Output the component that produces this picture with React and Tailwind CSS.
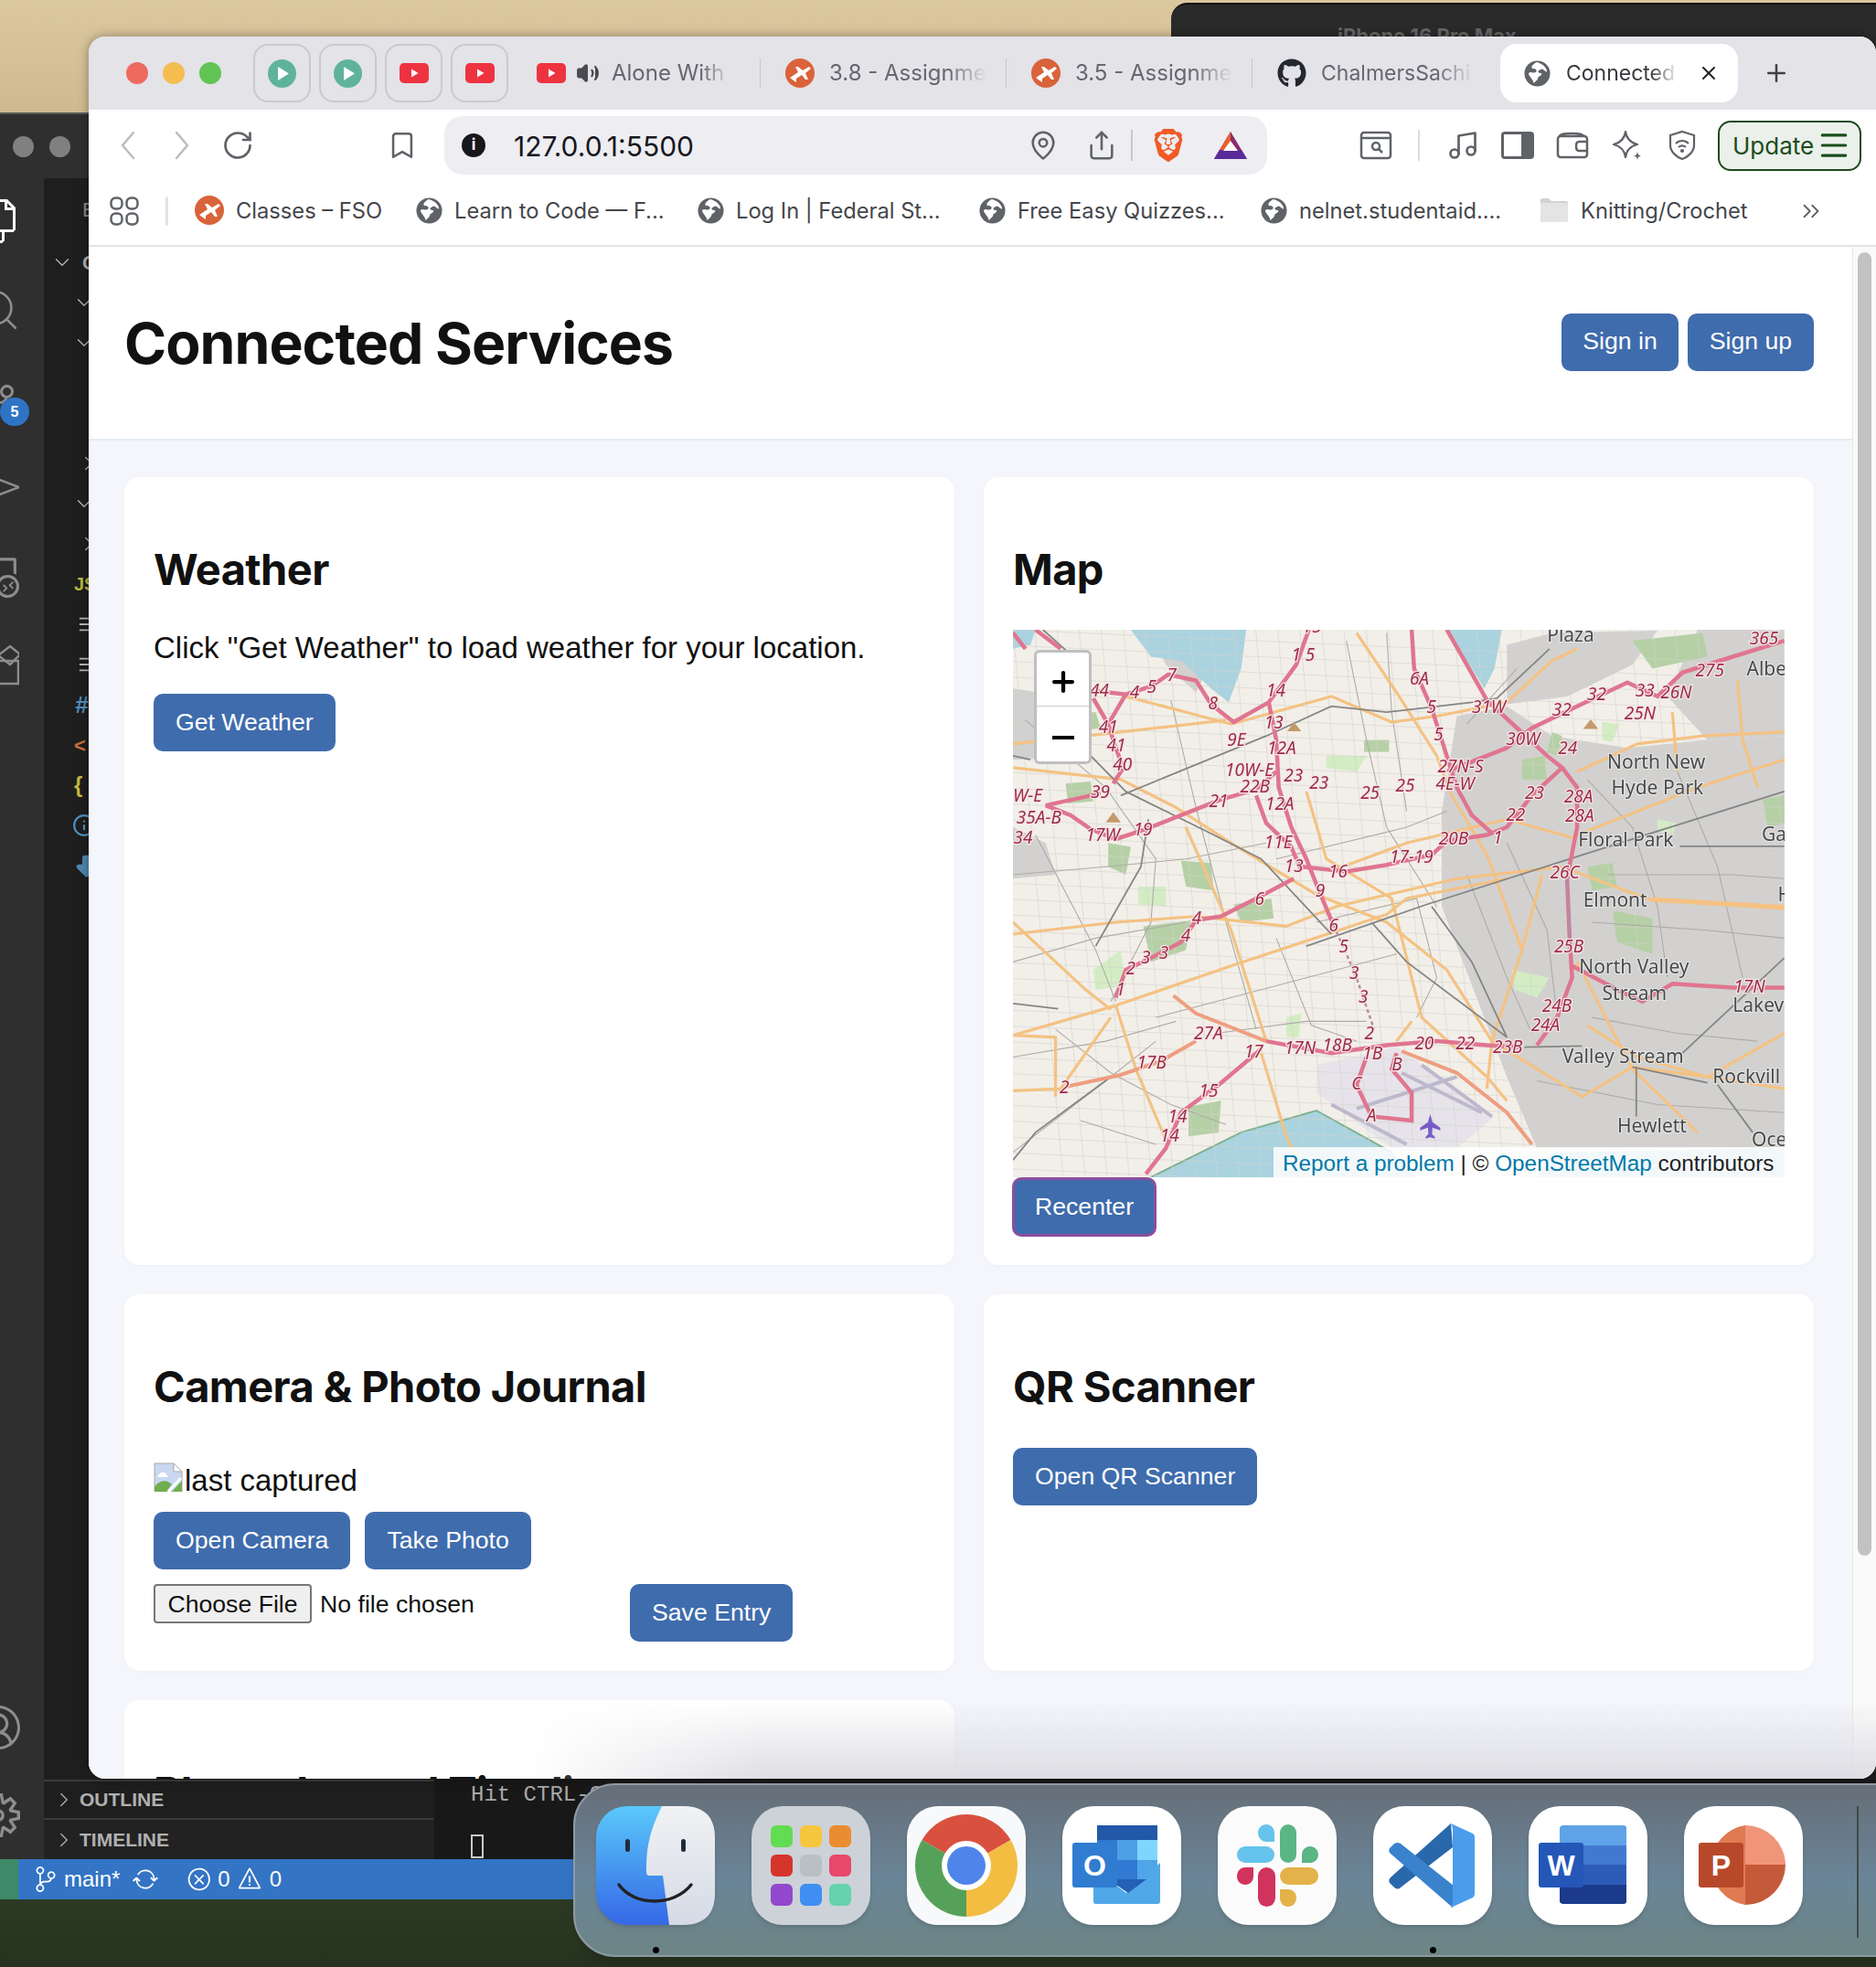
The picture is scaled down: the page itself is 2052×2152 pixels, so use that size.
import React from 'react';
import { ChevronRight, ChevronDown, RotateCw, Bookmark, MapPin, Share, Volume2, X, Plus, Music, Menu, ChevronsRight, Info, Search, ArrowBigDown } from 'lucide-react';
import { FaGithub } from 'react-icons/fa';
import { SiBrave } from 'react-icons/si';
import { VscFiles, VscSourceControl, VscRemoteExplorer, VscAccount, VscSettingsGear, VscSync, VscError, VscWarning } from 'react-icons/vsc';

// map data is in the crop's coordinates, mx/my bring it to map pixels
const mx = (x) => (x - 15) / 1.823;
const my = (y) => (y - 22) / 2.306;
const pts = (a) => {
  const out = [];
  for (let i = 0; i < a.length; i += 2) out.push(`${mx(a[i]).toFixed(1)},${my(a[i + 1]).toFixed(1)}`);
  return out.join(' ');
};

const grayAreas = [
  [900, 240, 1000, 215, 1090, 290, 1240, 320, 1400, 300, 1553, 290, 1553, 1330, 1060, 1330, 1000, 1150, 870, 720, 870, 480],
  [1000, 60, 1090, 30, 1300, 24, 1250, 110, 1120, 190, 1000, 210],
  [1380, 22, 1553, 22, 1553, 290, 1400, 300, 1320, 190],
  [15, 170, 120, 190, 170, 340, 15, 350],
  [15, 520, 80, 560, 100, 640, 15, 650],
  [300, 60, 400, 130, 380, 180, 320, 110],
];
const waterAreas = [
  [250, 22, 480, 22, 470, 120, 445, 205, 410, 170, 350, 100, 290, 90],
  [880, 22, 990, 22, 975, 120, 955, 170, 920, 100],
  [290, 1403, 470, 1290, 620, 1235, 770, 1340, 820, 1403],
  [15, 22, 60, 22, 50, 60, 15, 70],
  [1090, 1340, 1553, 1330, 1553, 1403, 1060, 1403],
];
const greenAreas = [
  [120, 410, 170, 405, 175, 455, 125, 460],
  [205, 560, 250, 570, 240, 640, 205, 620],
  [265, 670, 320, 670, 320, 720, 265, 715],
  [350, 605, 410, 610, 415, 680, 360, 670],
  [275, 770, 370, 755, 360, 830, 290, 860],
  [175, 880, 230, 830, 240, 920, 180, 930],
  [455, 715, 530, 700, 535, 750, 470, 760],
  [1210, 730, 1290, 750, 1290, 840, 1220, 810],
  [1010, 880, 1085, 900, 1060, 950, 1015, 930],
  [365, 1225, 430, 1210, 425, 1290, 365, 1300],
  [715, 300, 765, 300, 765, 330, 715, 330],
  [640, 340, 720, 340, 700, 380, 640, 370],
  [1250, 50, 1390, 30, 1400, 90, 1290, 120],
  [1030, 350, 1075, 340, 1080, 400, 1030, 400],
  [1190, 255, 1225, 260, 1210, 305, 1190, 300],
  [100, 220, 180, 230, 190, 270, 130, 280],
  [1090, 280, 1110, 290, 1100, 340, 1080, 330],
  [1300, 500, 1340, 510, 1330, 540, 1300, 530],
  [1160, 620, 1210, 610, 1220, 670, 1170, 680],
  [1510, 450, 1553, 440, 1553, 510, 1520, 520],
  [560, 1000, 590, 990, 585, 1050, 560, 1050],
];
const gridRoads = [];
for (let i = 0; i < 36; i++) {
  gridRoads.push([15 + i * 44, 22, 115 + i * 44, 1403]);
  gridRoads.push([15, 22 + i * 40, 1553, 110 + i * 40]);
}
const minorRoads = [
  [40, 250, 200, 420, 300, 600, 290, 760, 210, 960], [330, 200, 380, 470, 440, 760, 500, 1030],
  [15, 640, 200, 620, 360, 600, 520, 560], [15, 860, 180, 800, 360, 760], [60, 540, 180, 830, 220, 960],
  [15, 1100, 200, 1060, 340, 1010], [100, 1030, 210, 1140, 330, 1220, 440, 1270], [15, 1340, 200, 1160, 300, 1060],
  [680, 50, 720, 300, 760, 520, 860, 720], [760, 30, 770, 230, 800, 480], [540, 600, 800, 520, 880, 480],
  [620, 760, 820, 700, 860, 900, 820, 1000], [540, 800, 610, 1020, 700, 1060], [300, 1000, 420, 960, 600, 900, 780, 840],
  [1000, 560, 1080, 780, 1100, 1000], [1160, 400, 1250, 520, 1300, 720, 1320, 900], [1340, 380, 1420, 620, 1470, 900],
  [1170, 760, 1400, 780, 1553, 800], [1170, 1000, 1340, 1040, 1500, 1060], [1060, 1160, 1300, 1220, 1553, 1240],
  [920, 640, 1000, 900, 1050, 1040], [1200, 640, 1450, 640, 1553, 650], [150, 1260, 300, 1320],
  [420, 1040, 600, 1010, 720, 1010], [920, 260, 1020, 120],
];
const orangeRoads = [
  [15, 370, 230, 400, 340, 470, 450, 560, 620, 690, 760, 760, 880, 880, 970, 1060, 1150, 1200, 1250, 1125, 1400, 1150, 1553, 1040],
  [15, 790, 220, 760, 380, 745, 560, 770, 660, 720, 900, 650, 1110, 620, 1290, 705, 1553, 725],
  [220, 970, 450, 870, 760, 740, 800, 700, 1000, 650],
  [220, 970, 15, 1045], [220, 970, 260, 1130, 320, 1310], [360, 520, 450, 780, 500, 980, 520, 1060],
  [240, 190, 450, 260, 650, 190, 770, 255, 860, 240, 1000, 205, 1090, 100, 1140, 70],
  [15, 310, 230, 280, 440, 250], [600, 430, 640, 600, 770, 700, 830, 1000, 960, 1150, 1000, 1210],
  [1070, 640, 1030, 830, 970, 1060, 960, 1180], [890, 440, 960, 590, 1030, 830],
  [650, 630, 800, 560, 1000, 500, 1140, 550], [1553, 350, 1380, 420, 1140, 540],
  [1553, 280, 1390, 290, 1260, 310, 1140, 380], [700, 30, 780, 180, 860, 340, 890, 440],
  [210, 1000, 110, 1180, 15, 1185], [510, 1090, 560, 1300, 600, 1403], [1160, 1020, 1260, 1100, 1400, 1150, 1553, 1180],
  [15, 760, 160, 930, 210, 980], [15, 1045, 100, 1050, 100, 1200], [1140, 860, 1250, 1130, 1380, 1290],
  [1290, 700, 1553, 720], [810, 1010, 780, 1060], [1460, 150, 1470, 300, 1500, 420], [1330, 230, 1340, 380],
];
const railLines = [
  [75, 22, 170, 130, 170, 340, 240, 430, 400, 530, 510, 600, 650, 790],
  [600, 820, 840, 715, 1150, 590, 1553, 430], [230, 440, 520, 290, 650, 215, 760, 230, 930, 205, 980, 195, 1085, 70],
  [730, 760, 800, 860, 1000, 1050], [850, 720, 930, 860, 1000, 1050], [1035, 1075, 1150, 1072],
  [1250, 1125, 1400, 1165], [1258, 1125, 1258, 1250], [1420, 1170, 1490, 1290], [1345, 568, 1553, 568],
  [1350, 1090, 1553, 850], [15, 965, 105, 978], [15, 340, 50, 350], [180, 820, 270, 620, 285, 500],
  [210, 1150, 60, 1290, 15, 1360],
];
const motorways = [
  [170, 175, 240, 185, 290, 165, 325, 135, 380, 150, 410, 210, 455, 255, 525, 205, 580, 110, 605, 22],
  [240, 185, 205, 260, 175, 195], [205, 260, 220, 320, 235, 370, 215, 410],
  [80, 465, 190, 435], [80, 465, 130, 490, 170, 525, 220, 550, 280, 525, 350, 490, 430, 450, 500, 425, 540, 380],
  [525, 205, 540, 300, 545, 420, 570, 520, 600, 600, 625, 680, 655, 770],
  [500, 440, 520, 510, 570, 570, 590, 630],
  [590, 620, 680, 632, 760, 615, 850, 590, 880, 555, 960, 540, 1000, 520, 1050, 440, 1110, 370, 1080, 340, 1020, 270, 960, 200, 920, 110, 880, 22],
  [810, 22, 815, 120, 850, 220, 880, 340, 900, 420, 930, 490, 970, 535],
  [880, 380, 1000, 320, 1050, 270, 1140, 215, 1240, 155, 1300, 190, 1350, 130, 1450, 90, 1553, 50],
  [1110, 370, 1140, 420, 1140, 520, 1120, 650, 1125, 800, 1130, 900, 1100, 1000, 1060, 1070],
  [575, 650, 500, 700, 430, 745, 380, 755, 350, 810, 290, 850, 240, 880, 220, 950],
  [1130, 870, 1220, 930, 1270, 960, 1330, 915, 1450, 925, 1553, 925],
  [1030, 1075, 960, 1070, 860, 1060, 760, 1070, 650, 1090, 520, 1060],
  [510, 1080, 430, 1165, 350, 1240, 320, 1330, 280, 1395],
  [720, 1100, 700, 1170, 730, 1250, 810, 1260, 810, 1190, 770, 1130, 780, 1090],
  [60, 22, 110, 70], [15, 30, 40, 70],
];
const trunkRoads = [
  [335, 945, 380, 990, 520, 1060], [380, 1060, 310, 1110, 230, 1145, 120, 1175], [790, 1085, 900, 1140, 1000, 1240, 1050, 1320],
];
const roadLabels = [
  ['1 5', 570, 100], ['15', 592, 30], ['6A', 806, 160], ['5', 840, 232], ['5', 854, 300], ['31W', 930, 232], ['32', 1090, 238], ['32', 1160, 200],
  ['33', 1256, 190], ['26N', 1306, 195], ['275', 1376, 140], ['365', 1484, 60], ['25N', 1234, 248], ['24', 1102, 335], ['30W', 998, 312],
  ['44', 168, 190], ['4', 248, 195], ['5', 282, 182], ['7', 322, 150], ['8', 404, 222], ['14', 520, 190], ['13', 516, 272], ['9E', 442, 316],
  ['12A', 522, 336], ['41', 186, 282], ['41', 202, 328], ['40', 214, 376], ['10W-E', 438, 390], ['22B', 468, 432], ['23', 555, 405],
  ['23', 606, 424], ['25', 708, 448], ['25', 778, 430], ['27N-S', 862, 382], ['4E-W', 858, 426], ['23', 1036, 448], ['28A', 1114, 458],
  ['28A', 1116, 506], ['22', 998, 504], ['W-E', 15, 456], ['39', 170, 447], ['35A-B', 22, 510], ['34', 16, 562], ['17W', 160, 555], ['19', 255, 542],
  ['21', 406, 470], ['12A', 518, 476], ['11E', 516, 572], ['20B', 864, 564], ['1', 972, 562], ['17-19', 766, 610], ['13', 556, 634], ['16', 644, 646],
  ['9', 618, 696], ['6', 497, 716], ['6', 645, 784], ['4', 372, 764], ['4', 350, 808], ['5', 665, 836], ['3', 686, 904], ['3', 704, 962],
  ['3', 306, 852], ['3', 270, 864], ['2', 240, 892], ['1', 220, 945], ['26C', 1086, 650], ['25B', 1094, 836], ['24B', 1070, 986], ['24A', 1048, 1034],
  ['23B', 972, 1090], ['22', 898, 1080], ['20', 816, 1080], ['1B', 712, 1106], ['B', 770, 1134], ['C', 690, 1182], ['A', 720, 1262],
  ['18B', 632, 1086], ['17N', 556, 1092], ['17', 476, 1102], ['27A', 376, 1056], ['17B', 262, 1130], ['2', 108, 1190], ['15', 386, 1200],
  ['14', 324, 1266], ['14', 308, 1314], ['2', 716, 1054], ['17N', 1452, 938],
];
const placeLabels = [
  ['Plaza', 1080, 52], ['Albe', 1478, 138], ['North New', 1200, 372], ['Hyde Park', 1208, 438], ['Floral Park', 1142, 568], ['Ga', 1508, 554],
  ['Elmont', 1152, 720], ['H', 1540, 708], ['North Valley', 1144, 888], ['Stream', 1190, 955], ['Lakev', 1450, 985], ['Valley Stream', 1110, 1116],
  ['Rockvill', 1410, 1166], ['Hewlett', 1220, 1290], ['Oce', 1488, 1326],
];

function MapDrawing() {
  return (
    <svg width="844" height="599" viewBox="0 0 844 599" className="block blur-[0.5px]">
      <rect width="844" height="599" fill="#f2efe9" />
      {grayAreas.map((a, i) => <polygon key={i} points={pts(a)} fill="#d2d1d0" />)}
      {waterAreas.map((a, i) => <polygon key={i} points={pts(a)} fill="#aad3df" />)}
      {greenAreas.map((a, i) => <polygon key={i} points={pts(a)} fill={i % 3 === 2 ? '#d3ecc4' : '#b6d0a6'} />)}
      <polygon points={pts([620, 1120, 780, 1075, 975, 1250, 900, 1330, 780, 1340, 620, 1190])} fill="#e6e4ea" />
      <polyline points={pts([290, 1403, 470, 1290, 620, 1235, 770, 1340])} fill="none" stroke="#7fb08e" strokeWidth="2" />
      {gridRoads.map((a, i) => <polyline key={i} points={pts(a)} fill="none" stroke="#d4d1cc" strokeWidth="0.6" />)}
      {minorRoads.map((a, i) => <polyline key={i} points={pts(a)} fill="none" stroke="#aeaba7" strokeWidth="1.1" />)}
      {[[650, 1220, 800, 1320], [790, 1140, 950, 1240], [830, 1120, 970, 1250], [700, 1230, 900, 1150]].map((a, i) => (
        <polyline key={i} points={pts(a)} fill="none" stroke="#bdb8cc" strokeWidth="4" />
      ))}
      {orangeRoads.map((a, i) => <polyline key={i} points={pts(a)} fill="none" stroke="#f4c283" strokeWidth="3.2" />)}
      {railLines.map((a, i) => <polyline key={i} points={pts(a)} fill="none" stroke="#858585" strokeWidth="1.8" />)}
      {trunkRoads.map((a, i) => <polyline key={i} points={pts(a)} fill="none" stroke="#ef9e80" strokeWidth="4" />)}
      {motorways.map((a, i) => <polyline key={i} points={pts(a)} fill="none" stroke="#e0758f" strokeWidth="4.5" />)}
      <polyline points={pts([1120, 650, 1125, 800])} fill="none" stroke="#b78aa4" strokeWidth="3" />
      <polyline points={pts([655, 770, 680, 840, 700, 900, 735, 1030])} fill="none" stroke="#b98ea0" strokeWidth="2.5" strokeDasharray="4 3" />
      <polygon points={pts([575, 255, 590, 278, 562, 278])} fill="#c39a6b" />
      <polygon points={pts([215, 482, 230, 508, 200, 508])} fill="#c39a6b" />
      <polygon points={pts([1167, 248, 1182, 272, 1152, 272])} fill="#c39a6b" />
      {roadLabels.map(([t, x, y], i) => (
        <text key={i} x={mx(x)} y={my(y)} fontFamily="'Noto Sans', sans-serif" fontStyle="italic" fontSize="19" fill="#9c2c48" stroke="#f6e6e6" strokeWidth="2.500" paintOrder="stroke">{t}</text>
      ))}
      {placeLabels.map(([t, x, y], i) => (
        <text key={i} x={mx(x)} y={my(y)} fontFamily="'Noto Sans', sans-serif" fontSize="21" fill="#4a4a4a" stroke="#e8e8e8" strokeWidth="2" paintOrder="stroke">{t}</text>
      ))}
      <g transform={`translate(${mx(847)} ${my(1276)})`} fill="#7a5cc8">
        <path d="M0 -14 L2.5 -5 L11 1 V4 L2.5 1 L2 8 L5 11 V13 L0 11.5 L-5 13 V11 L-2 8 L-2.5 1 L-11 4 V1 L-2.5 -5 Z" />
      </g>
    </svg>
  );
}

function GlobeIcon({ size = 29 }) {
  return (
    <svg width={size} height={size} viewBox="0 0 30 30" className="shrink-0">
      <circle cx="15" cy="15" r="14.5" fill="#5f6368" />
      <path d="M14 2 C10 5 8 6 9 9 C11 10 13 9 14 11 C15 13 12 14 10 14 C8 13 6 13 5 15 C7 20 10 21 11 26 C13 24 16 22 16 19 C18 18 20 17 20 15 C18 14 16 15 16 12 C18 11 20 9 21 10 C23 11 24 13 26 13 C26 8 20 3 14 2 Z" fill="#fff" />
    </svg>
  );
}

function OrangeIcon() {
  return (
    <svg width="32" height="32" viewBox="0 0 32 32" className="shrink-0">
      <circle cx="16" cy="16" r="16" fill="#d9633a" />
      <path d="M5 21 L14 15 L11 9 L14 9 L19 13 L26 9 L28 11 L22 16 L25 23 L22 23 L18 18 L12 22 L12 26 L9 24 Z" fill="#fff" />
    </svg>
  );
}

function PlayIcon() {
  return (
    <svg width="31" height="31" viewBox="0 0 31 31">
      <circle cx="15.5" cy="15.5" r="15.5" fill="#5fb39a" />
      <path d="M11 8 L23 15.5 L11 23 Z" fill="#fff" />
    </svg>
  );
}

function YoutubeIcon() {
  return (
    <svg width="32" height="22" viewBox="0 0 32 22" className="shrink-0">
      <rect width="32" height="22" rx="5" fill="#ee3340" />
      <path d="M13 6.5 L20.5 11 L13 15.5 Z" fill="#fff" />
    </svg>
  );
}

function BatIcon() {
  return (
    <svg width="36" height="30" viewBox="0 0 36 30">
      <path d="M18 0 L36 30 H0 Z" fill="#8b2a6a" />
      <path d="M18 0 L0 30 H8 L18 12 Z" fill="#e8602c" />
      <path d="M0 30 L6 20 H30 L36 30 Z" fill="#5a2a9a" />
      <path d="M18 10 L26 21 H10 Z" fill="#fff" />
    </svg>
  );
}

function NavChevron({ dir, className = '' }) {
  return (
    <svg width="20" height="32" viewBox="0 0 20 32" fill="none" stroke="#bcbcc0" strokeWidth="2.5" strokeLinecap="round" strokeLinejoin="round" className={className}>
      <path d={dir === 'left' ? 'M16 2 L4 16 L16 30' : 'M4 2 L16 16 L4 30'} />
    </svg>
  );
}

function SearchPanelIcon() {
  return (
    <svg width="36" height="32" viewBox="0 0 36 32" fill="none" stroke="#5f6368" strokeWidth="2.5">
      <rect x="2" y="2" width="32" height="28" rx="3" />
      <path d="M2 8 H34" />
      <circle cx="18" cy="17" r="4" />
      <path d="M21 20 L25 24" />
    </svg>
  );
}

function SidePanelIcon() {
  return (
    <svg width="36" height="30" viewBox="0 0 36 30">
      <rect x="1.5" y="1.5" width="33" height="27" rx="2.5" fill="none" stroke="#5f6368" strokeWidth="3" />
      <rect x="22" y="1.5" width="12.5" height="27" fill="#5f6368" />
    </svg>
  );
}

function WalletIcon() {
  return (
    <svg width="36" height="30" viewBox="0 0 36 30" fill="none" stroke="#5f6368" strokeWidth="2.5">
      <rect x="2" y="5" width="32" height="23" rx="3" />
      <path d="M4 5 C4 1 30 1 30 5" />
      <path d="M34 11 H25 C21 11 21 21 25 21 H34" />
    </svg>
  );
}

function StarIcon() {
  return (
    <svg width="36" height="34" viewBox="0 0 36 34" fill="none" stroke="#5f6368" strokeWidth="2.2" strokeLinejoin="round">
      <path d="M16 2 C17 10 21 14 29 16 C21 18 17 22 16 30 C15 22 11 18 3 16 C11 14 15 10 16 2 Z" />
      <path d="M29 24 C29.500 27 30.500 28 33 28.500 C30.500 29 29.500 30 29 33 C28.500 30 27.500 29 25 28.500 C27.500 28 28.500 27 29 24 Z" fill="#5f6368" stroke="none" />
    </svg>
  );
}

function ShieldWifiIcon() {
  return (
    <svg width="32" height="34" viewBox="0 0 32 34" fill="none" stroke="#5f6368" strokeWidth="2.2">
      <path d="M16 2 L29 6 V17 C29 24 22 30 16 32 C10 30 3 24 3 17 V6 Z" />
      <path d="M9 15 C13 11 19 11 23 15" />
      <path d="M12 19 C14.5 17 17.5 17 20 19" />
      <circle cx="16" cy="23" r="1" fill="#5f6368" />
    </svg>
  );
}

function GridIcon() {
  return (
    <svg width="32" height="32" viewBox="0 0 32 32" fill="none" stroke="#5f6368" strokeWidth="2.5" className="shrink-0">
      <rect x="1.5" y="1.5" width="12" height="12" rx="5" />
      <rect x="18.5" y="1.5" width="12" height="12" rx="5" />
      <rect x="1.5" y="18.5" width="12" height="12" rx="5" />
      <rect x="18.5" y="18.5" width="12" height="12" rx="5" />
    </svg>
  );
}

function FolderIcon() {
  return (
    <svg width="32" height="28" viewBox="0 0 32 28" className="shrink-0">
      <path d="M1 3 C1 1.500 2 1 3 1 H10 L13 4 H29 C30.500 4 31 5 31 6 V25 C31 26.500 30 27 29 27 H3 C2 27 1 26.500 1 25 Z" fill="#d2d2d2" />
      <rect x="1" y="6" width="30" height="21" rx="2" fill="#e4e4e4" />
    </svg>
  );
}

function BrokenImage() {
  return (
    <svg width="32" height="32" viewBox="0 0 32 32" className="shrink-0">
      <path d="M1 1 H22 L31 10 V32 H1 Z" fill="#c9d7f0" stroke="#a9a9a9" strokeWidth="1" />
      <path d="M22 1 V10 H31 Z" fill="#fff" stroke="#a9a9a9" strokeWidth="1" />
      <path d="M4 16 C7 9 13 9 16 16 Z" fill="#fff" />
      <path d="M1 32 V27 C6 19 14 18 20 24 L14 32 Z" fill="#6fae4f" />
      <path d="M20 32 L31 20 V32 Z" fill="#6fae4f" />
      <path d="M16 32 L30 17" stroke="#fff" strokeWidth="3" />
    </svg>
  );
}

function PlayOutline() {
  return (
    <svg width="48" height="48" viewBox="0 0 48 48" fill="none" stroke="currentColor" strokeWidth="2.5">
      <path d="M0 6 L48 24 L0 42" />
    </svg>
  );
}

function ExtensionOutline() {
  return (
    <svg width="48" height="48" viewBox="0 0 48 48" fill="none" stroke="currentColor" strokeWidth="2.5">
      <rect x="14" y="20" width="33" height="25" />
      <path d="M38 4 L49 13 L38 24 L25 14 Z" />
    </svg>
  );
}

function FinderIcon() {
  return (
    <svg width="130" height="130" viewBox="0 0 130 130">
      <defs>
        <linearGradient id="fb" x1="0" y1="0" x2="0" y2="1"><stop offset="0" stopColor="#5ac8fa" /><stop offset="1" stopColor="#3568e6" /></linearGradient>
        <linearGradient id="fw" x1="0" y1="0" x2="0" y2="1"><stop offset="0" stopColor="#f1f2f4" /><stop offset="1" stopColor="#d5dae6" /></linearGradient>
      </defs>
      <rect width="130" height="130" rx="34" fill="url(#fb)" />
      <path d="M72 0 H96 C118 0 130 12 130 34 V96 C130 118 118 130 96 130 H80 L73 76 H58 C54 76 55 70 55 66 C55 40 62 20 72 0 Z" fill="url(#fw)" />
      <rect x="32" y="36" width="5" height="14" rx="2.500" fill="#1f2c3f" />
      <rect x="93" y="36" width="5" height="14" rx="2.500" fill="#1f2c3f" />
      <path d="M25 86 C42 110 85 110 104 86" fill="none" stroke="#222" strokeWidth="3.500" strokeLinecap="round" />
    </svg>
  );
}

function LaunchpadIcon() {
  const cells = ['#62dc52', '#f6c63e', '#ea8c30', '#d6352c', '#b8c0c4', '#e8486a', '#9248cc', '#3f8ef2', '#66d2ae'];
  return (
    <div className="w-[130px] h-[130px] rounded-[34px] bg-[#cdd2d8] grid grid-cols-3 gap-[8px] p-[21px] shadow-md">
      {cells.map((c) => (
        <svg key={c} width="24" height="24" viewBox="0 0 24 24"><rect width="24" height="24" rx="6" fill={c} /></svg>
      ))}
    </div>
  );
}

function ChromeIcon() {
  return (
    <div className="w-[130px] h-[130px] rounded-[34px] bg-[#f8f9fa] shadow-md">
      <svg width="130" height="130" viewBox="0 0 130 130">
        <path d="M65 65 L16.500 37 A56 56 0 0 1 113.500 37 Z" fill="#d9503f" />
        <path d="M65 65 L113.500 37 A56 56 0 0 1 65 121 Z" fill="#f3bd42" />
        <path d="M65 65 L65 121 A56 56 0 0 1 16.500 37 Z" fill="#56a15a" />
        <circle cx="65" cy="65" r="27" fill="#fff" />
        <circle cx="65" cy="65" r="21" fill="#4f85ea" />
      </svg>
    </div>
  );
}

function OutlookIcon() {
  return (
    <div className="w-[130px] h-[130px] rounded-[34px] bg-white shadow-md">
      <svg width="130" height="130" viewBox="0 0 130 130">
        <rect x="38" y="21" width="66" height="16" fill="#2158a8" />
        <rect x="38" y="37" width="22" height="22" fill="#2f78d0" />
        <rect x="60" y="37" width="22" height="22" fill="#4c9fe4" />
        <rect x="82" y="37" width="22" height="22" fill="#7ed6ff" />
        <rect x="38" y="59" width="22" height="22" fill="#2a68c0" />
        <rect x="60" y="59" width="22" height="22" fill="#3179d2" />
        <rect x="82" y="59" width="22" height="22" fill="#4ea6e8" />
        <path d="M34 68 L70 95 L107 62 V104 C107 106 106 107 104 107 H36 C35 107 34 106 34 104 Z" fill="#50a8e8" />
        <path d="M50 80 H92 L72 95 Z" fill="#2460b4" />
        <rect x="11" y="40" width="49" height="49" rx="3" fill="#2f7cd0" />
        <text x="35.500" y="76" textAnchor="middle" fontFamily="'Liberation Sans', sans-serif" fontWeight="700" fontSize="32" fill="#fff">O</text>
      </svg>
    </div>
  );
}

function SlackIcon() {
  return (
    <div className="w-[130px] h-[130px] rounded-[34px] bg-[#fbfbfb] shadow-md">
      <svg width="130" height="130" viewBox="0 0 130 130">
        <path d="M53 20 C48 20 44 24 44 29 C44 34 48 39 53 39 H62 V29 C62 24 58 20 53 20 Z" fill="#66c4ec" />
        <rect x="21" y="44" width="41" height="18" rx="9" fill="#66c4ec" />
        <rect x="68" y="20" width="18" height="42" rx="9" fill="#5bb585" />
        <path d="M101 44 C96 44 92 48 92 53 V62 H101 C106 62 110 58 110 53 C110 48 106 44 101 44 Z" fill="#5bb585" />
        <path d="M30 86 C35 86 39 82 39 77 V67 H30 C25 67 21 71 21 77 C21 82 25 86 30 86 Z" fill="#d0335c" />
        <rect x="44" y="67" width="19" height="43" rx="9.500" fill="#d0335c" />
        <rect x="68" y="67" width="42" height="19" rx="9.500" fill="#e4b24a" />
        <path d="M68 91 H77 C82 91 86 95 86 100 C86 106 82 110 77 110 C72 110 68 106 68 100 Z" fill="#e4b24a" />
      </svg>
    </div>
  );
}

function VsCodeIcon() {
  return (
    <div className="w-[130px] h-[130px] rounded-[34px] bg-white shadow-md">
      <svg width="130" height="130" viewBox="0 0 130 130">
        <path d="M85 19 L87 45 L30 89 C27 92 24 90 22 88 L18 84 C17 82 17 80 19 78 Z" fill="#2a68ac" />
        <path d="M30 41 C27 39 24 40 22 42 L18 46 C17 48 17 50 19 52 L87 111 L88 87 Z" fill="#3a82cc" />
        <path d="M85 19 L109 30 C110 31 111 32 111 34 V96 C111 98 110 99 109 100 L85 111 C86 108 87 106 87 104 V26 C87 24 86 21 85 19 Z" fill="#4b9ceb" />
      </svg>
    </div>
  );
}

function WordIcon() {
  return (
    <div className="w-[130px] h-[130px] rounded-[34px] bg-white shadow-md">
      <svg width="130" height="130" viewBox="0 0 130 130">
        <path d="M34 24 C34 22 36 21 38 21 H104 C106 21 107 22 107 24 V43 H34 Z" fill="#5ea3e8" />
        <rect x="34" y="43" width="73" height="21" fill="#4279d0" />
        <rect x="34" y="64" width="73" height="22" fill="#2c5cb8" />
        <path d="M34 86 H107 V104 C107 106 106 107 104 107 H38 C36 107 34 106 34 104 Z" fill="#1c3a8a" />
        <rect x="11" y="40" width="49" height="49" rx="3" fill="#2457b8" />
        <text x="35.500" y="76" textAnchor="middle" fontFamily="'Liberation Sans', sans-serif" fontWeight="700" fontSize="32" fill="#fff">W</text>
      </svg>
    </div>
  );
}

function PowerPointIcon() {
  return (
    <div className="w-[130px] h-[130px] rounded-[34px] bg-white shadow-md">
      <svg width="130" height="130" viewBox="0 0 130 130">
        <path d="M67 21 A44 44 0 0 0 67 108 Z" fill="#e07a52" />
        <path d="M67 21 A44 44 0 0 1 111 64 H67 Z" fill="#f0957a" />
        <path d="M67 64 H111 A44 44 0 0 1 67 108 Z" fill="#c55a3a" />
        <rect x="16" y="40" width="49" height="49" rx="3" fill="#b8482a" />
        <text x="40.500" y="76" textAnchor="middle" fontFamily="'Liberation Sans', sans-serif" fontWeight="700" fontSize="32" fill="#fff">P</text>
      </svg>
    </div>
  );
}

function BlueButton({ children, className = '' }) {
  return (
    <button className={`h-[63px] rounded-[10px] bg-[#3f6cad] text-white text-[26.67px] pb-[2px] whitespace-nowrap ${className}`}>
      {children}
    </button>
  );
}

function CardTitle({ children }) {
  return <h2 className="h-[56px] font-['Inter',sans-serif] font-bold text-[47px] leading-[56px] tracking-[-0.6px] text-[#111] whitespace-nowrap">{children}</h2>;
}

function Card({ children, className = '' }) {
  return <section className={`bg-white rounded-[16px] px-[32px] pt-[73px] shadow-[0_1px_4px_rgba(0,0,0,0.03)] ${className}`}>{children}</section>;
}

const fadeText = '[mask-image:linear-gradient(to_right,black_75%,transparent)]';

function BrowserTab({ icon, title, textW = 'w-[172px]', textSize = 'text-[24px]', sep = true, pr = 'pr-[21px]' }) {
  return (
    <>
      <div className={`flex items-center gap-[16px] pl-[27px] ${pr}`}>
        {icon}
        <span className={`${textW} ${textSize} overflow-hidden whitespace-nowrap text-[#66676f] ${fadeText}`}>{title}</span>
      </div>
      {sep && <span className="w-[1px] h-[32px] bg-[#c5c5ca]" />}
    </>
  );
}

const bookmarks = [
  { label: 'Classes – FSO', icon: <OrangeIcon />, w: 'w-[242px]' },
  { label: 'Learn to Code — F...', icon: <GlobeIcon />, w: 'w-[308px]' },
  { label: 'Log In | Federal St...', icon: <GlobeIcon />, w: 'w-[308px]' },
  { label: 'Free Easy Quizzes...', icon: <GlobeIcon />, w: 'w-[308px]' },
  { label: 'nelnet.studentaid....', icon: <GlobeIcon />, w: 'w-[305px]' },
  { label: 'Knitting/Crochet', icon: <FolderIcon />, w: 'w-[282px]' },
];

function BrowserWindow() {
  return (
    <div className="absolute left-[97px] top-[40px] w-[1955px] h-[1906px] rounded-[18px] overflow-hidden flex flex-col bg-white font-['Liberation_Sans',sans-serif] shadow-[0_0_12px_rgba(0,0,0,0.35)]">
      {/* tab strip */}
      <div className="h-[80px] shrink-0 bg-[#e3e3e8] flex items-center font-['Inter',sans-serif]">
        <div className="flex gap-[16px] ml-[41px]">
          <span className="w-[24px] h-[24px] rounded-full bg-[#ee6a5f]" />
          <span className="w-[24px] h-[24px] rounded-full bg-[#f5bd4f]" />
          <span className="w-[24px] h-[24px] rounded-full bg-[#61c454]" />
        </div>
        <div className="flex gap-[9px] ml-[35px]">
          {[<PlayIcon key="a" />, <PlayIcon key="b" />, <YoutubeIcon key="c" />, <YoutubeIcon key="d" />].map((ic, i) => (
            <div key={i} className="w-[63px] h-[64px] rounded-[16px] border-2 border-[#cacacd] flex items-center justify-center">{ic}</div>
          ))}
        </div>
        <div className="flex items-center ml-[31px]">
          <YoutubeIcon />
          <Volume2 size={26} fill="currentColor" className="ml-[11px] text-[#4a4a50]" />
          <span className={`ml-[13px] w-[131px] overflow-hidden whitespace-nowrap text-[24px] text-[#66676f] ${fadeText}`}>Alone With</span>
          <span className="ml-[31px] w-[1px] h-[32px] bg-[#c5c5ca]" />
        </div>
        <BrowserTab icon={<OrangeIcon />} title="3.8 - Assignme" />
        <BrowserTab icon={<OrangeIcon />} title="3.5 - Assignme" />
        <BrowserTab icon={<FaGithub size={32} className="text-[#24292f] shrink-0" />} title="ChalmersSachi" textW="w-[168px]" textSize="text-[23px]" sep={false} pr="pr-[28px]" />
        <div className="w-[260px] h-[64px] rounded-[18px] bg-white flex items-center pl-[26px]">
          <GlobeIcon />
          <span className={`ml-[17px] w-[123px] overflow-hidden whitespace-nowrap text-[23px] text-[#3a3a40] ${fadeText}`}>Connected</span>
          <X size={24} className="ml-[21px] text-[#222]" />
        </div>
        <Plus size={30} className="ml-[27px] text-[#3f3f44]" />
      </div>

      {/* toolbar */}
      <div className="h-[78px] shrink-0 flex items-center font-['Inter',sans-serif] text-[#5f6368]">
        <NavChevron dir="left" className="ml-[33px]" />
        <NavChevron dir="right" className="ml-[39px]" />
        <RotateCw size={36} strokeWidth={1.8} className="ml-[33px]" />
        <Bookmark size={34} strokeWidth={1.8} className="ml-[145px]" />
        <div className="ml-[29px] w-[900px] h-[64px] rounded-[20px] bg-[#ededf2] flex items-center">
          <span className="ml-[19px] w-[26px] h-[26px] rounded-full bg-[#17171c] flex items-center justify-center text-white text-[17px] font-bold">i</span>
          <span className="ml-[31px] flex-1 text-[30px] pt-[2px] text-[#17171c]">127.0.0.1:5500</span>
          <MapPin size={34} strokeWidth={1.8} />
          <Share size={34} strokeWidth={1.8} className="ml-[30px]" />
          <span className="ml-[15px] w-[2px] h-[34px] bg-[#c8c8cc]" />
          <SiBrave size={36} className="ml-[21px] text-[#f15a24]" />
          <span className="ml-[32px] mr-[22px]"><BatIcon /></span>
        </div>
        <span className="ml-[101px]"><SearchPanelIcon /></span>
        <span className="ml-[28px] w-[2px] h-[34px] bg-[#dcdce0]" />
        <Music size={36} strokeWidth={1.8} className="ml-[29px]" />
        <span className="ml-[24px]"><SidePanelIcon /></span>
        <span className="ml-[24px]"><WalletIcon /></span>
        <span className="ml-[24px]"><StarIcon /></span>
        <span className="ml-[26px]"><ShieldWifiIcon /></span>
        <div className="ml-[23px] w-[157px] h-[55px] rounded-[14px] border-2 border-[#1f4a1f] bg-[#ebf0eb] flex items-center pl-[14px] text-[#1a4d1a]">
          <span className="text-[26px]">Update</span>
          <Menu size={38} strokeWidth={2} className="ml-[3px]" />
        </div>
      </div>

      {/* bookmarks */}
      <div className="h-[72px] shrink-0 border-b-2 border-[#e3e3e8] pb-[5px] flex items-center font-['Inter',sans-serif]">
        <span className="ml-[23px]"><GridIcon /></span>
        <span className="ml-[29px] w-[3px] h-[32px] rounded bg-[#e3e3e8]" />
        <div className="flex items-center ml-[29px]">
          {bookmarks.map((b) => (
            <div key={b.label} className={`${b.w} flex items-center gap-[13px]`}>
              {b.icon}
              <span className="text-[23.7px] text-[#45464b] whitespace-nowrap">{b.label}</span>
            </div>
          ))}
        </div>
        <ChevronsRight size={30} strokeWidth={1.5} className="text-[#5f6368]" />
      </div>

      {/* page */}
      <div className="flex-1 min-h-0 flex relative">
        <main className="w-[1929px] bg-[#f4f6fb] text-[#111] overflow-hidden">
          <header className="h-[212px] bg-white border-b-2 border-[#e4ebf4] flex items-center justify-between pl-[39px] pr-[42px]">
            <h1 className="font-['Inter',sans-serif] font-bold text-[62.5px] tracking-[-1px] pt-[2px]">Connected Services</h1>
            <div className="flex gap-[10px] mb-[2px]">
              <BlueButton className="w-[128px]">Sign in</BlueButton>
              <BlueButton className="w-[138px]">Sign up</BlueButton>
            </div>
          </header>
          <div className="grid grid-cols-2 gap-x-[32px] gap-y-[32px] pl-[39px] pr-[42px] pt-[40px]">
            <Card className="h-[862px]">
              <CardTitle>Weather</CardTitle>
              <p className="mt-[35px] text-[33px] leading-[46px] whitespace-nowrap">Click "Get Weather" to load weather for your location.</p>
              <BlueButton className="mt-[27px] px-[24px]">Get Weather</BlueButton>
            </Card>
            <Card className="h-[862px]">
              <CardTitle>Map</CardTitle>
              <div className="mt-[38px] w-[844px] h-[599px] relative overflow-hidden">
                <MapDrawing />
                <div className="absolute left-[23px] top-[22px] w-[63px] h-[125px] rounded-[6px] bg-white border-[3px] border-[#bfbfbf] flex flex-col">
                  <div className="flex-1 pt-[6px] flex items-center justify-center border-b border-[#ccc]"><Plus size={34} strokeWidth={3} className="text-black" /></div>
                  <div className="flex-1 pt-[8px] flex items-center justify-center"><span className="block w-[24px] h-[4px] bg-black" /></div>
                </div>
                <div className="absolute right-0 bottom-0 w-[559px] h-[33px] bg-white/85 flex items-center pl-[10px] pt-[3px] text-[24.3px] text-[#222] whitespace-nowrap">
                  <span className="text-[#0078a8]">Report a problem</span>&nbsp;| ©&nbsp;<span className="text-[#0078a8]">OpenStreetMap</span>&nbsp;contributors
                </div>
              </div>
              <BlueButton className="-ml-[1px] block h-[65px] w-[158px] px-[21px] border-[3px] border-[#8a4f9e]">Recenter</BlueButton>
            </Card>
            <Card className="h-[412px]">
              <CardTitle>Camera &amp; Photo Journal</CardTitle>
              <div className="mt-[55px] h-[54px] flex items-start text-[33px] leading-[38px]">
                <BrokenImage />
                <span className="ml-[2px] pt-[1px]">last captured</span>
              </div>
              <div className="flex gap-[16px]">
                <BlueButton className="px-[24px]">Open Camera</BlueButton>
                <BlueButton className="px-[24px]">Take Photo</BlueButton>
              </div>
              <div className="mt-[16px] flex items-start">
                <input type="file" className="w-[521px] text-[26.67px] file:h-[43px] file:w-[173px] file:mr-[9px] file:bg-[#efefef] file:border-2 file:border-[#767676] file:rounded-[4px]" />
                <BlueButton className="px-[24px]">Save Entry</BlueButton>
              </div>
            </Card>
            <Card className="h-[412px]">
              <CardTitle>QR Scanner</CardTitle>
              <BlueButton className="mt-[39px] px-[24px]">Open QR Scanner</BlueButton>
            </Card>
            <Card className="h-[300px]">
              <CardTitle>Photo Journal Timeline</CardTitle>
            </Card>
          </div>
        </main>
        <div className="w-[26px] bg-[#fafafa] border-l border-[#e8e8e8] pt-[6px] pl-[5px]">
          <div className="w-[15px] h-[1426px] rounded-full bg-[#c2c2c2]" />
        </div>
        {/* blur of the dock over the page */}
        <div className="absolute left-[480px] right-0 bottom-0 h-[85px] bg-[linear-gradient(to_bottom,rgba(220,220,226,0),rgba(220,220,226,0.95))] [mask-image:linear-gradient(to_right,transparent,black_260px)]" />
      </div>
    </div>
  );
}

const treeRows = [
  { el: <ChevronDown size={26} strokeWidth={1.2} />, pl: 'pl-[7px]', tail: <b className="ml-[9px] text-[#b0b0b0] text-[22px]">C</b> },
  { el: <ChevronDown size={26} strokeWidth={1.2} />, pl: 'pl-[31px]' },
  { el: <ChevronDown size={26} strokeWidth={1.2} />, pl: 'pl-[31px]' },
  {},
  {},
  { el: <ChevronRight size={26} strokeWidth={1.2} />, pl: 'pl-[36px]' },
  { el: <ChevronDown size={26} strokeWidth={1.2} />, pl: 'pl-[31px]' },
  { el: <ChevronRight size={26} strokeWidth={1.2} />, pl: 'pl-[36px]' },
  { el: <b className="text-[#b9b53d] text-[20px]">JS</b>, pl: 'pl-[33px]' },
  { el: <Menu size={22} />, pl: 'pl-[36px]' },
  { el: <Menu size={22} />, pl: 'pl-[36px]' },
  { el: <b className="italic text-[#4f8fbd] text-[26px]">#</b>, pl: 'pl-[34px]' },
  { el: <b className="text-[#c8703a] text-[22px]">&lt; &gt;</b>, pl: 'pl-[33px]' },
  { el: <b className="text-[#c4b840] text-[24px]">{'{ }'}</b>, pl: 'pl-[33px]' },
  { el: <Info size={26} className="text-[#4f8fbd]" />, pl: 'pl-[31px]' },
  { el: <ArrowBigDown size={30} fill="#4f86ad" className="text-[#4f86ad]" />, pl: 'pl-[32px]' },
];

function VsCodeWindow() {
  return (
    <div className="absolute left-0 top-[123px] w-[2052px] h-[1955px] flex flex-col bg-[#1e1e1e] border-t-2 border-[#5a5a5a] text-[#bdbdbd] font-['Liberation_Sans',sans-serif]">
      <div className="h-[70px] shrink-0 bg-[#2f2f2f] flex items-center gap-[17px] pl-[14px]">
        <span className="w-[23px] h-[23px] rounded-full bg-[#808080]" />
        <span className="w-[23px] h-[23px] rounded-full bg-[#808080]" />
      </div>
      <div className="flex-1 min-h-0 flex">
        <div className="w-[48px] bg-[#2f2f2f] flex flex-col shrink-0">
          <div className="mt-[23px] flex flex-col gap-[49px] -ml-[27px] text-[#8d8d8d] relative">
            <VscFiles size={48} className="text-white" />
            <Search size={48} strokeWidth={1.2} className="scale-110" />
            <VscSourceControl size={48} />
            <PlayOutline />
            <VscRemoteExplorer size={48} />
            <ExtensionOutline />
            <span className="absolute left-[27px] top-[217px] w-[32px] h-[31px] rounded-full bg-[#2f74c4] text-white text-[16px] font-bold flex items-center justify-center">5</span>
          </div>
          <div className="mt-auto flex flex-col gap-[48px] -ml-[26px] pb-[24px] text-[#8d8d8d]">
            <VscAccount size={48} />
            <VscSettingsGear size={48} />
          </div>
        </div>
        <div className="flex-1 flex flex-col min-w-0">
          <div className="flex-1 min-h-0 bg-[#1e1e1e] overflow-hidden">
            <div className="pl-[42px] mt-[20px] mb-[20px] text-[#8a8a8a] text-[22px] leading-[30px]">E</div>
            {treeRows.map((r, i) => (
              <div key={i} className={`h-[44px] flex items-center ${r.pl || ''} text-[#b9b9b9]`}>{r.el}{r.tail}</div>
            ))}
          </div>
          <div className="h-[87px] flex shrink-0 text-[21px]">
            <div className="w-[427px] bg-[#1e1e1e] border-t-2 border-[#3a3a3a] font-bold text-[#b0b0b0]">
              <div className="h-[42px] flex items-center gap-[4px] pl-[9px] border-b-2 border-[#3a3a3a]"><ChevronRight size={26} strokeWidth={1.2} /> OUTLINE</div>
              <div className="h-[43px] flex items-center gap-[4px] pl-[9px] bg-[#222]"><ChevronRight size={26} strokeWidth={1.2} /> TIMELINE</div>
            </div>
            <div className="flex-1 bg-[#181818] pl-[40px] font-['Liberation_Mono',monospace] text-[24px] text-[#a8a8a8]">
              <div className="h-[34px] leading-[34px]">Hit CTRL-C to stop the server</div>
              <div className="mt-[26px] w-[14px] h-[26px] border-2 border-[#c8c8c8]" />
            </div>
          </div>
        </div>
      </div>
      <div className="h-[44px] shrink-0 flex">
        <div className="w-[20px] bg-[#3f8a68]" />
        <div className="flex-1 bg-[#3374c4] flex items-center pl-[16px] text-white text-[24px]">
          <VscSourceControl size={28} />
          <span className="ml-[6px]">main*</span>
          <VscSync size={28} className="ml-[14px]" />
          <VscError size={28} className="ml-[31px]" />
          <span className="ml-[6px]">0</span>
          <VscWarning size={28} className="ml-[7px]" />
          <span className="ml-[8px]">0</span>
        </div>
      </div>
    </div>
  );
}

function DockItem({ children, running }) {
  return (
    <div className="flex flex-col items-center">
      {children}
      {running && <span className="mt-[24px] w-[7px] h-[7px] rounded-full bg-black" />}
    </div>
  );
}

function Dock() {
  return (
    <div className="absolute left-[627px] top-[1951px] w-[1500px] h-[190px] rounded-[46px] border-2 border-[#8d9aa3] bg-[linear-gradient(to_bottom,#666e78,#6a8598_55%,#6d8585)] flex items-start pl-[23px] pt-[23px] gap-[40px] shadow-lg">
      <DockItem running><div className="rounded-[34px] shadow-md"><FinderIcon /></div></DockItem>
      <DockItem><LaunchpadIcon /></DockItem>
      <DockItem><ChromeIcon /></DockItem>
      <DockItem><OutlookIcon /></DockItem>
      <DockItem><SlackIcon /></DockItem>
      <DockItem running><VsCodeIcon /></DockItem>
      <DockItem><WordIcon /></DockItem>
      <DockItem><PowerPointIcon /></DockItem>
      <span className="ml-[19px] w-[2px] h-[144px] bg-[#3f4a4a]" />
    </div>
  );
}

export default function App() {
  return (
    <div className="relative w-[2052px] h-[2152px] overflow-hidden bg-[linear-gradient(to_bottom,#dcc89f,#cfba90_123px,#2c3a24_2078px,#26331f)]">
      <div className="absolute left-[1281px] top-[3px] w-[800px] h-[200px] rounded-t-[18px] bg-[#2a2a2a] border-t-2 border-[#111] pl-[182px] pt-[18px] text-[#666] text-[22px] font-bold font-['Inter',sans-serif]">iPhone 16 Pro Max</div>
      <VsCodeWindow />
      <BrowserWindow />
      <Dock />
    </div>
  );
}
